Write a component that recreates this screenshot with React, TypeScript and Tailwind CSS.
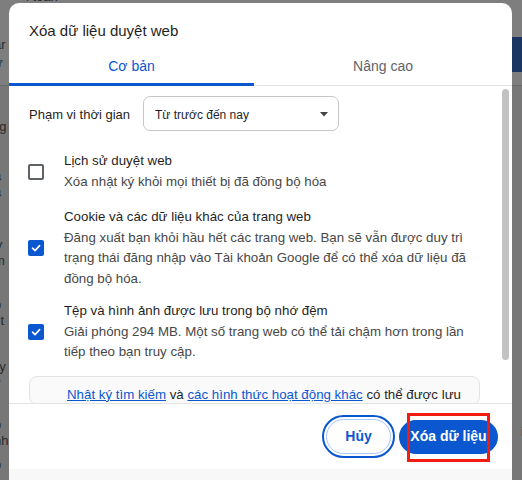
import React from "react";

const font = { fontFamily: '"Liberation Sans", Arial, sans-serif' };

function Checkbox({ checked }: { checked: boolean }) {
  if (!checked)
    return (
      <div className="w-[16px] h-[16px] rounded-[2px] border-2 border-[#5f6368] bg-white shrink-0" />
    );
  return (
    <div className="w-[16px] h-[16px] rounded-[2px] bg-[#0b57d0] shrink-0 flex items-center justify-center">
      <svg width="12" height="12" viewBox="0 0 12 12">
        <path d="M2.5 6.2 L5 8.6 L9.6 3.6" fill="none" stroke="white" strokeWidth="1.6" strokeLinecap="round" strokeLinejoin="round" />
      </svg>
    </div>
  );
}

function Row({ checked, title, lines, className }: { checked: boolean; title: string; lines: string[]; className?: string }) {
  return (
    <div className={"flex items-center " + (className ?? "")}>
      <div className="w-[35px] flex -ml-[1px]">
        <Checkbox checked={checked} />
      </div>
      <div className="flex flex-col text-[13.3px] leading-[20.5px] ml-[1px]">
        <div className="text-[#1f1f1f]">{title}</div>
        {lines.map((l, i) => (
          <div key={i} className="text-[#474747]">{l}</div>
        ))}
      </div>
    </div>
  );
}

export default function App() {
  return (
    <div className="relative w-[522px] h-[480px] overflow-hidden bg-[#777777]" style={font}>
      {/* background page (dimmed) */}
      <div className="flex flex-col text-[13px] leading-[16px] text-[#2a2a2a]">
        <div className="h-[86px] bg-[#7e7e7e] border-b border-[#6a6a6a] relative">
          <div className="absolute left-[26px] top-[-11px]">i toàn</div>
          <div className="absolute left-[-6px] top-[37px]">ar</div>
          <div className="absolute left-[-6px] top-[55px]">ữ</div>
          <div className="absolute right-0 top-[37px] w-[10px] h-[35px] bg-[#1b3563]" />
        </div>
        <div className="relative h-[394px]">
          <div className="absolute left-[-8px] top-[33px]">ng</div>
          <div className="absolute left-[-6px] top-[82px]">a</div>
          <div className="absolute left-[-6px] top-[98px]">a</div>
          <div className="absolute left-[-6px] top-[151px]">ớ</div>
          <div className="absolute left-[-6px] top-[167px]">m</div>
          <div className="absolute left-[-6px] top-[211px]">o</div>
          <div className="absolute left-[-6px] top-[227px]">i t</div>
          <div className="absolute left-[-8px] top-[273px]">uy</div>
          <div className="absolute left-[-6px] top-[289px]">ỳ</div>
          <div className="absolute left-[-6px] top-[331px]">o</div>
          <div className="absolute left-[-6px] top-[347px]">nh</div>
          <div className="absolute left-[-6px] top-[371px]">o</div>
          <div className="absolute right-[-2px] top-[338px]">i</div>
        </div>
      </div>

      {/* dialog */}
      <div className="absolute left-[9px] top-[3px] w-[503px] h-[490px] rounded-[10px] bg-white flex flex-col overflow-hidden">
        <div className="pt-[18px] px-[20px] text-[15px] leading-[20px] text-[#1f1f1f]">Xóa dữ liệu duyệt web</div>
        <div className="mt-[5px] flex h-[40px] border-b border-[#e3e3e3]">
          <div className="w-[245px] flex items-center justify-center relative text-[14px] font-medium text-[#0b57d0] pt-[2px]">
            Cơ bản
            <div className="absolute left-0 right-0 bottom-[-1px] h-[3px] bg-[#0b57d0]" />
          </div>
          <div className="flex-1 flex items-center justify-center text-[14px] font-medium text-[#5f6368] pt-[2px]">Nâng cao</div>
        </div>

        <div className="flex h-[317px]">
          <div className="flex-1 flex flex-col pl-[20px] pr-[20px] overflow-hidden">
            <div className="flex items-center mt-[10px]">
              <div className="text-[13px] text-[#1f1f1f] w-[114px] pt-[3px]">Phạm vi thời gian</div>
              <div className="w-[196px] h-[35px] rounded-[7px] border border-[#c7c7c7] flex items-center justify-between pl-[11px] pr-[10px] pt-[2px] text-[12px] text-[#1f1f1f]">
                <span>Từ trước đến nay</span>
                <svg width="8" height="5" viewBox="0 0 8 5"><path d="M0 0 L8 0 L4 4.5 Z" fill="#444" /></svg>
              </div>
            </div>

            <Row className="mt-[20px]" checked={false} title="Lịch sử duyệt web" lines={["Xóa nhật ký khỏi mọi thiết bị đã đồng bộ hóa"]} />
            <Row
              className="mt-[15px]"
              checked
              title="Cookie và các dữ liệu khác của trang web"
              lines={[
                "Đăng xuất bạn khỏi hầu hết các trang web. Bạn sẽ vẫn được duy trì",
                "trạng thái đăng nhập vào Tài khoản Google để có thể xóa dữ liệu đã",
                "đồng bộ hóa.",
              ]}
            />
            <Row
              className="mt-[12px]"
              checked
              title="Tệp và hình ảnh được lưu trong bộ nhớ đệm"
              lines={["Giải phóng 294 MB. Một số trang web có thể tải chậm hơn trong lần", "tiếp theo bạn truy cập."]}
            />

            <div className="mt-[13px] w-[451px] h-[60px] rounded-[8px] border border-[#e3e3e3] bg-[#fafafa] pl-[37px] pt-[8px] text-[13.3px] text-[#1f1f1f]">
              <span className="text-[#0b57d0] underline">Nhật ký tìm kiếm</span> và{" "}
              <span className="text-[#0b57d0] underline">các hình thức hoạt động khác</span> có thể được lưu
            </div>
          </div>
          <div className="w-[12px] flex justify-end pr-[3px] pt-[3px]">
            <div className="w-[7px] h-[271px] rounded-full bg-[#c2c2c2]" />
          </div>
        </div>

        <div className="border-t border-[#e3e3e3] h-[66px] flex items-center justify-end pr-[14px] gap-[4px]">
          <div className="rounded-full border-2 border-[#0b57d0] p-[2px]">
            <div className="w-[65px] h-[35px] rounded-full border border-[#a8c7fa] flex items-center justify-center text-[14px] font-bold text-[#0b57d0]">
              Hủy
            </div>
          </div>
          <div className="relative w-[99px] h-[34px] rounded-full bg-[#0b57d0] flex items-center justify-center text-[14px] font-bold text-white">
            Xóa dữ liệu
            <div className="absolute left-[8px] top-[-7px] w-[83px] h-[49px] border-[3px] border-[#f21d0f]" />
          </div>
        </div>
        <div className="flex-1 bg-[#f8f8f8]" />
      </div>
    </div>
  );
}
